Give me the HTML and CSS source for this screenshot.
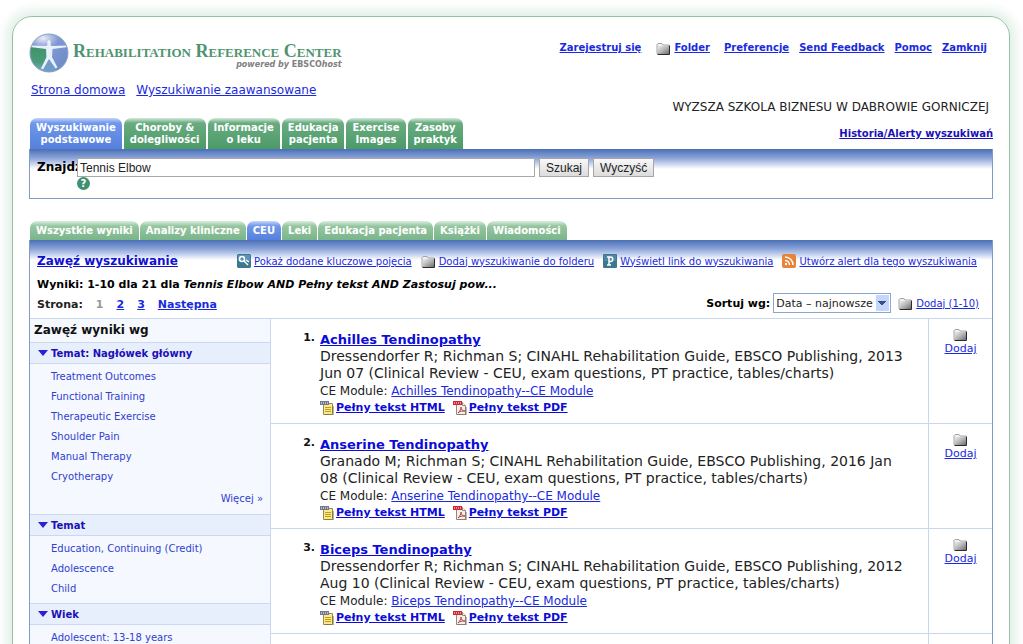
FILE: index.html
```html
<!DOCTYPE html>
<html lang="pl">
<head>
<meta charset="utf-8">
<title>Rehabilitation Reference Center</title>
<link rel="stylesheet" href="styles.css">
</head>
<body>
<svg class="defs" aria-hidden="true">
  <defs>
    <linearGradient id="folderFill" x1="0" y1="0" x2="1" y2="1">
      <stop offset="0" stop-color="#ececec"/><stop offset=".5" stop-color="#b4b4b4"/><stop offset="1" stop-color="#6c6c6c"/>
    </linearGradient>
    <linearGradient id="globeBlue" x1="0" y1="0" x2="1" y2="1">
      <stop offset="0" stop-color="#6f86c4"/><stop offset=".5" stop-color="#7f98d4"/><stop offset="1" stop-color="#6585c0"/>
    </linearGradient>
    <linearGradient id="globeGreen" x1="0" y1="0" x2="0" y2="1">
      <stop offset="0" stop-color="#3f9468"/><stop offset=".6" stop-color="#4a9c7c"/><stop offset="1" stop-color="#88aeca"/>
    </linearGradient>
    <radialGradient id="globeShine" cx=".35" cy=".2" r=".4">
      <stop offset="0" stop-color="#fff" stop-opacity=".85"/><stop offset="1" stop-color="#fff" stop-opacity="0"/>
    </radialGradient>
    <clipPath id="globeClip"><circle cx="20" cy="20" r="19"/></clipPath>
    <symbol id="folder" viewBox="0 0 15 13">
      <path d="M1 11.500V2.500l1-1h4l1 1.500h6v8.500z" fill="#efefef" stroke="#a4a4a4"/>
      <path d="M2 4h11v8H2z" fill="url(#folderFill)"/>
      <path d="M13.500 3.500v9H1.500" fill="none" stroke="#2a2a2a"/>
    </symbol>
    <symbol id="html" viewBox="0 0 14 14">
      <path d="M3.500 2.500h9v10l-1 1h-8z" fill="#fbe98a" stroke="#968a4a"/>
      <path d="M5 6.500h6M5 8.500h6M5 10.500h6" stroke="#c39b20"/>
      <path d="M0 0h9v4H0z" fill="#6f7690"/><path d="M1 2h7" stroke="#fff" stroke-dasharray="1 1"/>
      <path d="M13 5v9H5" fill="none" stroke="#6f6840"/>
    </symbol>
    <symbol id="pdf" viewBox="0 0 14 14">
      <path d="M3.500 1.500h6l3 3v9h-9z" fill="#f2f0ec" stroke="#958878"/>
      <path d="M9.500 1.500v3h3" fill="#fff" stroke="#958878"/>
      <path d="M5 12c2-2 3-4 3-6 0 3 2 4 4 4-3 0-5 0-7 2" fill="none" stroke="#b84444"/>
      <path d="M0 0h9v4H0z" fill="#d3252f"/><path d="M1 2h7" stroke="#fff" stroke-dasharray="1 1"/>
      <path d="M13 6v8H4" fill="none" stroke="#82755e"/>
    </symbol>
  </defs>
</svg>
<div class="frame">
  <header class="header">
    <div class="header-left">
      <div class="brand">
        <svg class="globe" viewBox="0 0 40 40" role="img" aria-label="Logo">
          <g clip-path="url(#globeClip)">
            <path d="M0 0h40v40H0z" fill="url(#globeBlue)"/>
            <path d="M0 14h18l-1 12-6 14H0z" fill="url(#globeGreen)"/>
            <path d="M11 40l9-13 9 13z" fill="#6f9cc8"/>
            <path d="M0 0h40v26H0z" fill="url(#globeShine)"/>
            <path d="M1 12.500l16 .5c1-.3 1.500-.7 1.500-1.500a1.800 2.800 0 1 1 3 0c0 .8.500 1.200 1.500 1.500l16-.5v1.500l-15.500 2-.5 8 5.500 10.500-2 1L20 26l-6 10.500-2-1L17.500 24l-.5-8L1 14z" fill="#e8f1fb"/>
          </g>
          <circle cx="20" cy="20" r="19" fill="none" stroke="#8aa3c4"/>
        </svg>
        <div class="brand-text">
          <div class="brand-name">Rehabilitation Reference Center</div>
          <div class="brand-sub"><em>powered by</em> EBSCO<em>host</em></div>
        </div>
      </div>
      <nav class="site-links"><a href="#">Strona domowa</a><a href="#">Wyszukiwanie zaawansowane</a></nav>
      <nav class="tabs">
        <a class="tab active" href="#">Wyszukiwanie<br>podstawowe</a>
        <a class="tab" href="#">Choroby &amp;<br>dolegliwości</a>
        <a class="tab" href="#">Informacje<br>o leku</a>
        <a class="tab" href="#">Edukacja<br>pacjenta</a>
        <a class="tab" href="#">Exercise<br>Images</a>
        <a class="tab" href="#">Zasoby<br>praktyk</a>
      </nav>
    </div>
    <div class="header-right">
      <nav class="user-links">
        <a href="#">Zarejestruj się</a>
        <span class="with-icon folder-link"><svg class="folder"><use href="#folder"/></svg><a href="#">Folder</a></span>
        <a href="#">Preferencje</a><a href="#">Send Feedback</a><a href="#">Pomoc</a><a href="#">Zamknij</a>
      </nav>
      <div class="institution">WYZSZA SZKOLA BIZNESU W DABROWIE GORNICZEJ</div>
      <a class="history" href="#">Historia/Alerty wyszukiwań</a>
    </div>
  </header>

  <form class="panel search">
    <label class="search-label" for="q">Znajdź</label>
    <div class="search-body">
      <div class="search-row">
        <input class="search-input" id="q" type="text" value="Tennis Elbow">
        <button class="btn" type="button">Szukaj</button>
        <button class="btn" type="reset">Wyczyść</button>
      </div>
      <button class="help" type="button" aria-label="Pomoc">?</button>
    </div>
  </form>

  <nav class="tabs subtabs">
    <a class="tab" href="#">Wszystkie wyniki</a>
    <a class="tab" href="#">Analizy kliniczne</a>
    <a class="tab active" href="#">CEU</a>
    <a class="tab" href="#">Leki</a>
    <a class="tab" href="#">Edukacja pacjenta</a>
    <a class="tab" href="#">Książki</a>
    <a class="tab" href="#">Wiadomości</a>
  </nav>

  <main class="panel results">
    <div class="toolbar">
      <a class="refine" href="#">Zawęź wyszukiwanie</a>
      <div class="tools">
        <span class="with-icon"><svg class="tool" viewBox="0 0 14 14"><path d="M1 0h12l1 1v12l-1 1H1l-1-1V1z" fill="#3d7890"/><path d="M1 1h12v6H1z" fill="#5a93b8"/><circle cx="5" cy="5" r="2.500" fill="none" stroke="#fff" stroke-width="1.500"/><path d="M7 7l4 4M9 6l3 2" stroke="#fff" stroke-width="1.500"/></svg><a href="#">Pokaż dodane kluczowe pojęcia</a></span>
        <span class="with-icon"><svg class="folder"><use href="#folder"/></svg><a href="#">Dodaj wyszukiwanie do folderu</a></span>
        <span class="with-icon"><svg class="tool" viewBox="0 0 14 14"><rect width="14" height="14" rx="1" fill="#3d7890"/><path d="M1 1h12v6H1z" fill="#4e86a4"/><path d="M4 3h3.500c3 0 3 4.500 0 4.500H6M6 3v8M4 11h4" fill="none" stroke="#fff" stroke-width="1.500"/></svg><a href="#">Wyświetl link do wyszukiwania</a></span>
        <span class="with-icon"><svg class="tool" viewBox="0 0 14 14"><rect width="14" height="14" rx="2" fill="#e8833a"/><path d="M3 3a8 8 0 0 1 8 8M3 6.500A4.500 4.500 0 0 1 7.500 11" fill="none" stroke="#fff" stroke-width="1.500"/><circle cx="4" cy="10" r="1.200" fill="#fff"/></svg><a href="#">Utwórz alert dla tego wyszukiwania</a></span>
      </div>
    </div>
    <h1 class="summary">Wyniki: 1-10 dla 21 dla <em>Tennis Elbow AND Pełny tekst AND Zastosuj pow...</em></h1>
    <div class="pager-row">
      <nav class="pager"><span>Strona:</span><span class="current">1</span><a href="#">2</a><a href="#">3</a><a href="#">Następna</a></nav>
      <div class="sort">
        <label for="sort">Sortuj wg:</label>
        <select id="sort"><option>Data – najnowsze</option></select>
        <span class="with-icon"><svg class="folder"><use href="#folder"/></svg><a href="#">Dodaj (1-10)</a></span>
      </div>
    </div>
    <div class="columns">
      <aside class="sidebar">
        <h2 class="side-title">Zawęź wyniki wg</h2>
        <h3 class="side-head">Temat: Nagłówek główny</h3>
        <ul class="facets">
          <li><a href="#">Treatment Outcomes</a></li><li><a href="#">Functional Training</a></li><li><a href="#">Therapeutic Exercise</a></li><li><a href="#">Shoulder Pain</a></li><li><a href="#">Manual Therapy</a></li><li><a href="#">Cryotherapy</a></li>
          <li class="more"><a href="#">Więcej »</a></li>
        </ul>
        <h3 class="side-head">Temat</h3>
        <ul class="facets"><li><a href="#">Education, Continuing (Credit)</a></li><li><a href="#">Adolescence</a></li><li><a href="#">Child</a></li></ul>
        <h3 class="side-head">Wiek</h3>
        <ul class="facets"><li><a href="#">Adolescent: 13-18 years</a></li></ul>
      </aside>
      <div class="list">
        <article class="item">
          <div class="num">1.</div>
          <div class="record">
            <a class="title" href="#">Achilles Tendinopathy</a>
            <p class="source">Dressendorfer R; Richman S; CINAHL Rehabilitation Guide, EBSCO Publishing, 2013 Jun 07 (Clinical Review - CEU, exam questions, PT practice, tables/charts)</p>
            <div class="module">CE Module: <a href="#">Achilles Tendinopathy--CE Module</a></div>
            <div class="formats"><span><svg class="doc"><use href="#html"/></svg><a href="#">Pełny tekst HTML</a></span><span><svg class="doc"><use href="#pdf"/></svg><a href="#">Pełny tekst PDF</a></span></div>
          </div>
          <div class="add"><svg class="folder"><use href="#folder"/></svg><a href="#">Dodaj</a></div>
        </article>
        <article class="item">
          <div class="num">2.</div>
          <div class="record">
            <a class="title" href="#">Anserine Tendinopathy</a>
            <p class="source">Granado M; Richman S; CINAHL Rehabilitation Guide, EBSCO Publishing, 2016 Jan 08 (Clinical Review - CEU, exam questions, PT practice, tables/charts)</p>
            <div class="module">CE Module: <a href="#">Anserine Tendinopathy--CE Module</a></div>
            <div class="formats"><span><svg class="doc"><use href="#html"/></svg><a href="#">Pełny tekst HTML</a></span><span><svg class="doc"><use href="#pdf"/></svg><a href="#">Pełny tekst PDF</a></span></div>
          </div>
          <div class="add"><svg class="folder"><use href="#folder"/></svg><a href="#">Dodaj</a></div>
        </article>
        <article class="item">
          <div class="num">3.</div>
          <div class="record">
            <a class="title" href="#">Biceps Tendinopathy</a>
            <p class="source">Dressendorfer R; Richman S; CINAHL Rehabilitation Guide, EBSCO Publishing, 2012 Aug 10 (Clinical Review - CEU, exam questions, PT practice, tables/charts)</p>
            <div class="module">CE Module: <a href="#">Biceps Tendinopathy--CE Module</a></div>
            <div class="formats"><span><svg class="doc"><use href="#html"/></svg><a href="#">Pełny tekst HTML</a></span><span><svg class="doc"><use href="#pdf"/></svg><a href="#">Pełny tekst PDF</a></span></div>
          </div>
          <div class="add"><svg class="folder"><use href="#folder"/></svg><a href="#">Dodaj</a></div>
        </article>
        <article class="item">
          <div class="num"></div>
          <div class="record"></div>
          <div class="add"><svg class="folder"><use href="#folder"/></svg></div>
        </article>
      </div>
    </div>
  </main>
</div>
</body>
</html>
```
FILE: styles.css
```css
* { box-sizing: border-box; }
body {
  margin: 0;
  height: 100vh;
  overflow: hidden;
  background: #fff;
  color: #222;
  font-family: "DejaVu Sans", Verdana, sans-serif;
  font-size: 11px;
}
a { color: #1a2ae0; }
h1, h2, h3, p, ul { margin: 0; padding: 0; }
ul { list-style: none; }
svg { flex: none; display: block; }
.defs { position: absolute; width: 0; height: 0; }
.folder { width: 15px; height: 13px; }
.tool, .doc { width: 14px; height: 14px; }
.with-icon { display: flex; align-items: center; gap: 3px; }

.frame {
  margin: 16px 13px 0 12px;
  padding: 0 16px;
  min-height: 100vh;
  border: 1px solid #93c2a4;
  border-radius: 20px 20px 0 0;
  box-shadow: 0 0 12px 6px #e2f0e8;
}

/* header */
.header { display: flex; justify-content: space-between; }
.header-left { padding-top: 16px; }
.brand { display: flex; gap: 4px; height: 40px; }
.globe { width: 40px; height: 40px; }
.brand-text { padding-top: 8px; text-align: right; }
.brand-name {
  color: #4f9470;
  font: bold 18px/20px "Liberation Serif", "Times New Roman", serif;
  font-variant: small-caps;
  white-space: nowrap;
}
.brand-sub { color: #808080; font-size: 8px; font-weight: bold; line-height: 8px; }
.site-links { display: flex; gap: 11px; margin: 9px 0 20px 2px; font-size: 12px; line-height: 16px; }
.header-right {
  display: flex;
  flex-direction: column;
  align-items: flex-end;
  padding-top: 23px;
  line-height: 16px;
}
.user-links { display: flex; gap: 10px; padding-right: 6px; font-size: 10px; font-weight: bold; }
.folder-link { margin: 0 4px 0 5px; }
.institution { margin: 43px 4px 11px 0; font-size: 12px; }
.history { font-size: 10px; font-weight: bold; color: #1a10b8; }

/* tabs */
.tabs { display: flex; gap: 2px; padding-left: 1px; }
.tab {
  padding: 4px 6px 3px;
  border-radius: 7px 7px 0 0;
  background: linear-gradient(#d3e9da 0, #69ab80 5px, #4c9a68);
  color: #fff;
  font-size: 10px;
  font-weight: bold;
  line-height: 12px;
  text-align: center;
  text-decoration: none;
}
.subtabs { gap: 1px; margin-top: 22px; }
.subtabs .tab { background: linear-gradient(#dcefe0 0, #96c6a0 5px, #7ab58a); }
.tabs .tab.active { background: linear-gradient(#c5d5fa 0, #6f97ea 5px, #5580dc); }

/* panels */
.panel {
  border: 1px solid #7f9bc8;
  border-top: 0;
  background: linear-gradient(#4a6fb5, #8ba4da 9px, #fff 20px);
}
.search { display: flex; padding: 9px 7px 7px; height: 50px; }
.search-label { width: 40px; font-size: 12px; font-weight: bold; line-height: 18px; color: #000; white-space: nowrap; }
.search-body { position: relative; flex: 1; }
.search-row { display: flex; gap: 4px; }
.search-input {
  width: 458px;
  height: 19px;
  padding: 0 2px;
  border: 1px solid #a9a9a9;
  background: #fff;
  color: #222;
  font: 12px "Liberation Sans", Arial, sans-serif;
}
.btn {
  height: 19px;
  padding: 0 6px;
  border: 1px solid #a6a6a6;
  background: linear-gradient(#f8f8f8, #dcdcdc);
  color: #222;
  font: 12px "Liberation Sans", Arial, sans-serif;
}
.help {
  display: block;
  width: 13px;
  height: 13px;
  padding: 0;
  border: 0;
  border-radius: 50%;
  background: #3f8f70;
  color: #fff;
  font: bold 10px/13px "DejaVu Sans", sans-serif;
}

/* results */
.toolbar { display: flex; justify-content: space-between; align-items: center; padding: 12px 15px 0 7px; height: 30px; }
.refine { font-size: 12px; font-weight: bold; color: #1010d0; }
.tools { display: flex; gap: 9px; font-size: 10px; white-space: nowrap; }
.summary { padding-left: 7px; font-size: 11px; line-height: 29px; color: #000; }
.pager-row { display: flex; justify-content: space-between; height: 19px; padding: 0 13px 0 7px; }
.pager { display: flex; gap: 13px; font-size: 11px; font-weight: bold; line-height: 12px; }
.pager .current { color: #999; }
.sort { display: flex; gap: 3px; align-items: center; height: 20px; margin-top: -6px; font-size: 10px; }
.sort label { color: #000; font-size: 11px; font-weight: bold; }
.sort select {
  height: 20px;
  width: 118px;
  margin-right: 4px;
  padding: 0 16px 0 2px;
  border: 1px solid #8ba6cc;
  border-radius: 0;
  appearance: none;
  background:
    linear-gradient(45deg, transparent 50%, #34507c 50%) right 8px center / 4px 4px no-repeat,
    linear-gradient(-45deg, transparent 50%, #34507c 50%) right 4px center / 4px 4px no-repeat,
    linear-gradient(#c4d6fb, #c4d6fb) right 1px center / 13px 16px no-repeat,
    #fff;
  color: #222;
  font: 11px "DejaVu Sans", sans-serif;
}
.columns { display: grid; grid-template-columns: 241px 1fr; border-top: 1px solid #c8d6ee; }
.sidebar { border-right: 1px solid #cbd8f0; background: #f5f8fe; }
.side-title { padding-left: 4px; font-size: 12px; line-height: 23px; color: #111; }
.side-head {
  display: flex;
  align-items: center;
  gap: 3px;
  height: 22px;
  padding-left: 8px;
  border: solid #cbd8f0;
  border-width: 1px 0;
  background: #e8effc;
  color: #1c10b8;
  font-size: 10px;
}
.side-head::before {
  content: "";
  border: solid transparent;
  border-width: 6px 5px 0;
  border-top-color: #2a20d8;
}
.facets { padding: 3px 0 4px 21px; font-size: 10px; line-height: 20px; }
.facets a { color: #2f3fd0; text-decoration: none; }
.facets .more { padding-right: 7px; line-height: 23px; text-align: right; }
.item { display: grid; grid-template-columns: 49px 1fr 64px; border-bottom: 1px solid #c8d6ee; }
.num { padding: 12px 5px 0 0; font-weight: bold; font-size: 11px; line-height: 14px; text-align: right; color: #111; }
.record { padding: 12px 18px 7px 0; }
.title { display: block; font-size: 13px; font-weight: bold; line-height: 17px; color: #0c0cd8; }
.source { font-size: 14px; line-height: 17px; }
.module { font-size: 12px; line-height: 18px; }
.formats { display: flex; gap: 8px; font-size: 11px; font-weight: bold; line-height: 16px; }
.formats span { display: flex; align-items: center; gap: 2px; }
.formats a { color: #0c0cd8; }
.add { display: flex; flex-direction: column; align-items: center; padding-top: 9px; border-left: 1px solid #c8d6ee; font-size: 11px; line-height: 16px; }
```
